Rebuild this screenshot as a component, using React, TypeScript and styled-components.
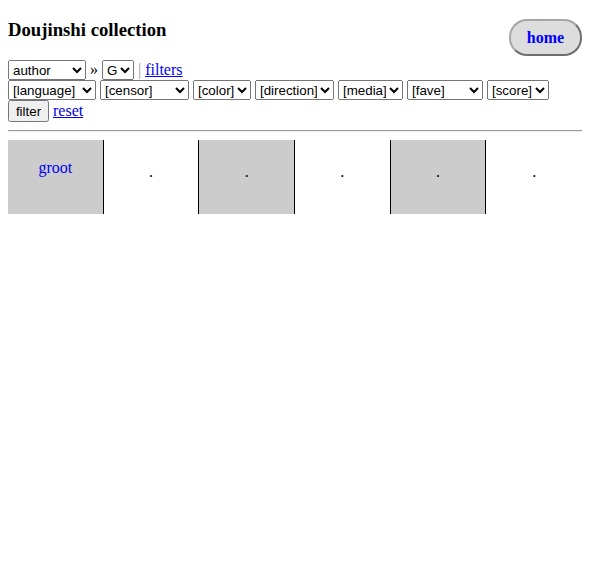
import * as React from 'react';
import styled, { createGlobalStyle } from 'styled-components';

const GlobalStyle = createGlobalStyle`
	body {
		margin: 8px;
		font-family: "Liberation Serif", "Times New Roman", serif;
		font-size: 16px;
		color: #000;
		background: #fff;
	}
	a {
		color: #0000ee;
	}
`;

const Header = styled.div`
	display: flex;
	justify-content: space-between;
	align-items: flex-start;
	padding-top: 11px;
`;

const Title = styled.h3`
	margin: 0;
	font-size: 18.72px;
	line-height: 21px;
	font-weight: bold;
`;

const HomeButton = styled.a`
	display: flex;
	align-items: center;
	justify-content: center;
	box-sizing: border-box;
	width: 73px;
	height: 37px;
	border-radius: 18px;
	background: #dddddd;
	border: 2px solid #a6a6a6;
	border-right-color: #6e6e6e;
	border-bottom-color: #6e6e6e;
	color: #0000ff;
	font-weight: bold;
	font-size: 16px;
	text-decoration: none;
`;

const Form = styled.form`
	margin-top: 4px;
	display: flex;
	flex-direction: column;
`;

const Row = styled.div<{ h?: number }>`
	display: flex;
	align-items: center;
	gap: 4px;
	height: ${props => props.h || 20}px;
`;

const Select = styled.select<{ w: number }>`
	box-sizing: border-box;
	width: ${props => props.w}px;
	height: 20px;
	margin: 0;
	font-family: "Liberation Sans", Arial, sans-serif;
	font-size: 13.33px;
`;

const Sep = styled.span<{ muted?: boolean }>`
	color: ${props => (props.muted ? '#999' : '#000')};
	font-size: 16px;
	line-height: 20px;
`;

const Button = styled.button`
	box-sizing: border-box;
	width: 41px;
	height: 22px;
	margin: 0;
	padding: 0;
	font-family: "Liberation Sans", Arial, sans-serif;
	font-size: 13.33px;
`;

const Rule = styled.hr`
	margin: 8px 0;
	border: none;
	border-top: 1px solid #9a9a9a;
	border-bottom: 1px solid #eeeeee;
`;

const Grid = styled.div`
	display: grid;
	grid-template-columns: repeat(6, 1fr);
	height: 74px;
`;

const Cell = styled.div<{ shade: boolean; last: boolean }>`
	display: flex;
	flex-direction: column;
	align-items: center;
	justify-content: center;
	background: ${props => (props.shade ? '#cccccc' : '#ffffff')};
	border-right: ${props => (props.last ? 'none' : '1px solid #000')};
	line-height: 18px;
`;

const Dot = styled.span`
	padding-bottom: 10px;
`;

const Name = styled.a`
	text-decoration: none;
	color: #0000ee;
`;

const Spacer = styled.div`
	height: 18px;
`;

const filterSelects: [string, number][] = [
	['[language]', 88],
	['[censor]', 89],
	['[color]', 58],
	['[direction]', 79],
	['[media]', 65],
	['[fave]', 76],
	['[score]', 62],
];

export default function App() {
	return (
		<>
			<GlobalStyle />
			<Header>
				<Title>Doujinshi collection</Title>
				<HomeButton href="#">home</HomeButton>
			</Header>
			<Form>
				<Row>
					<Select w={78} defaultValue="author">
						<option value="author">author</option>
					</Select>
					<Sep>»</Sep>
					<Select w={32} defaultValue="G">
						<option value="G">G</option>
					</Select>
					<Sep muted>|</Sep>
					<a href="#">filters</a>
				</Row>
				<Row>
					{filterSelects.map(([label, w]) => (
						<Select key={label} w={w}>
							<option>{label}</option>
						</Select>
					))}
				</Row>
				<Row h={22}>
					<Button type="button">filter</Button>
					<a href="#">reset</a>
				</Row>
			</Form>
			<Rule />
			<Grid>
				{[0, 1, 2, 3, 4, 5].map(i => (
					<Cell key={i} shade={i % 2 === 0} last={i === 5}>
						{i === 0 ? (
							<>
								<Name href="#">groot</Name>
								<Spacer />
							</>
						) : (
							<Dot>.</Dot>
						)}
					</Cell>
				))}
			</Grid>
		</>
	);
}
